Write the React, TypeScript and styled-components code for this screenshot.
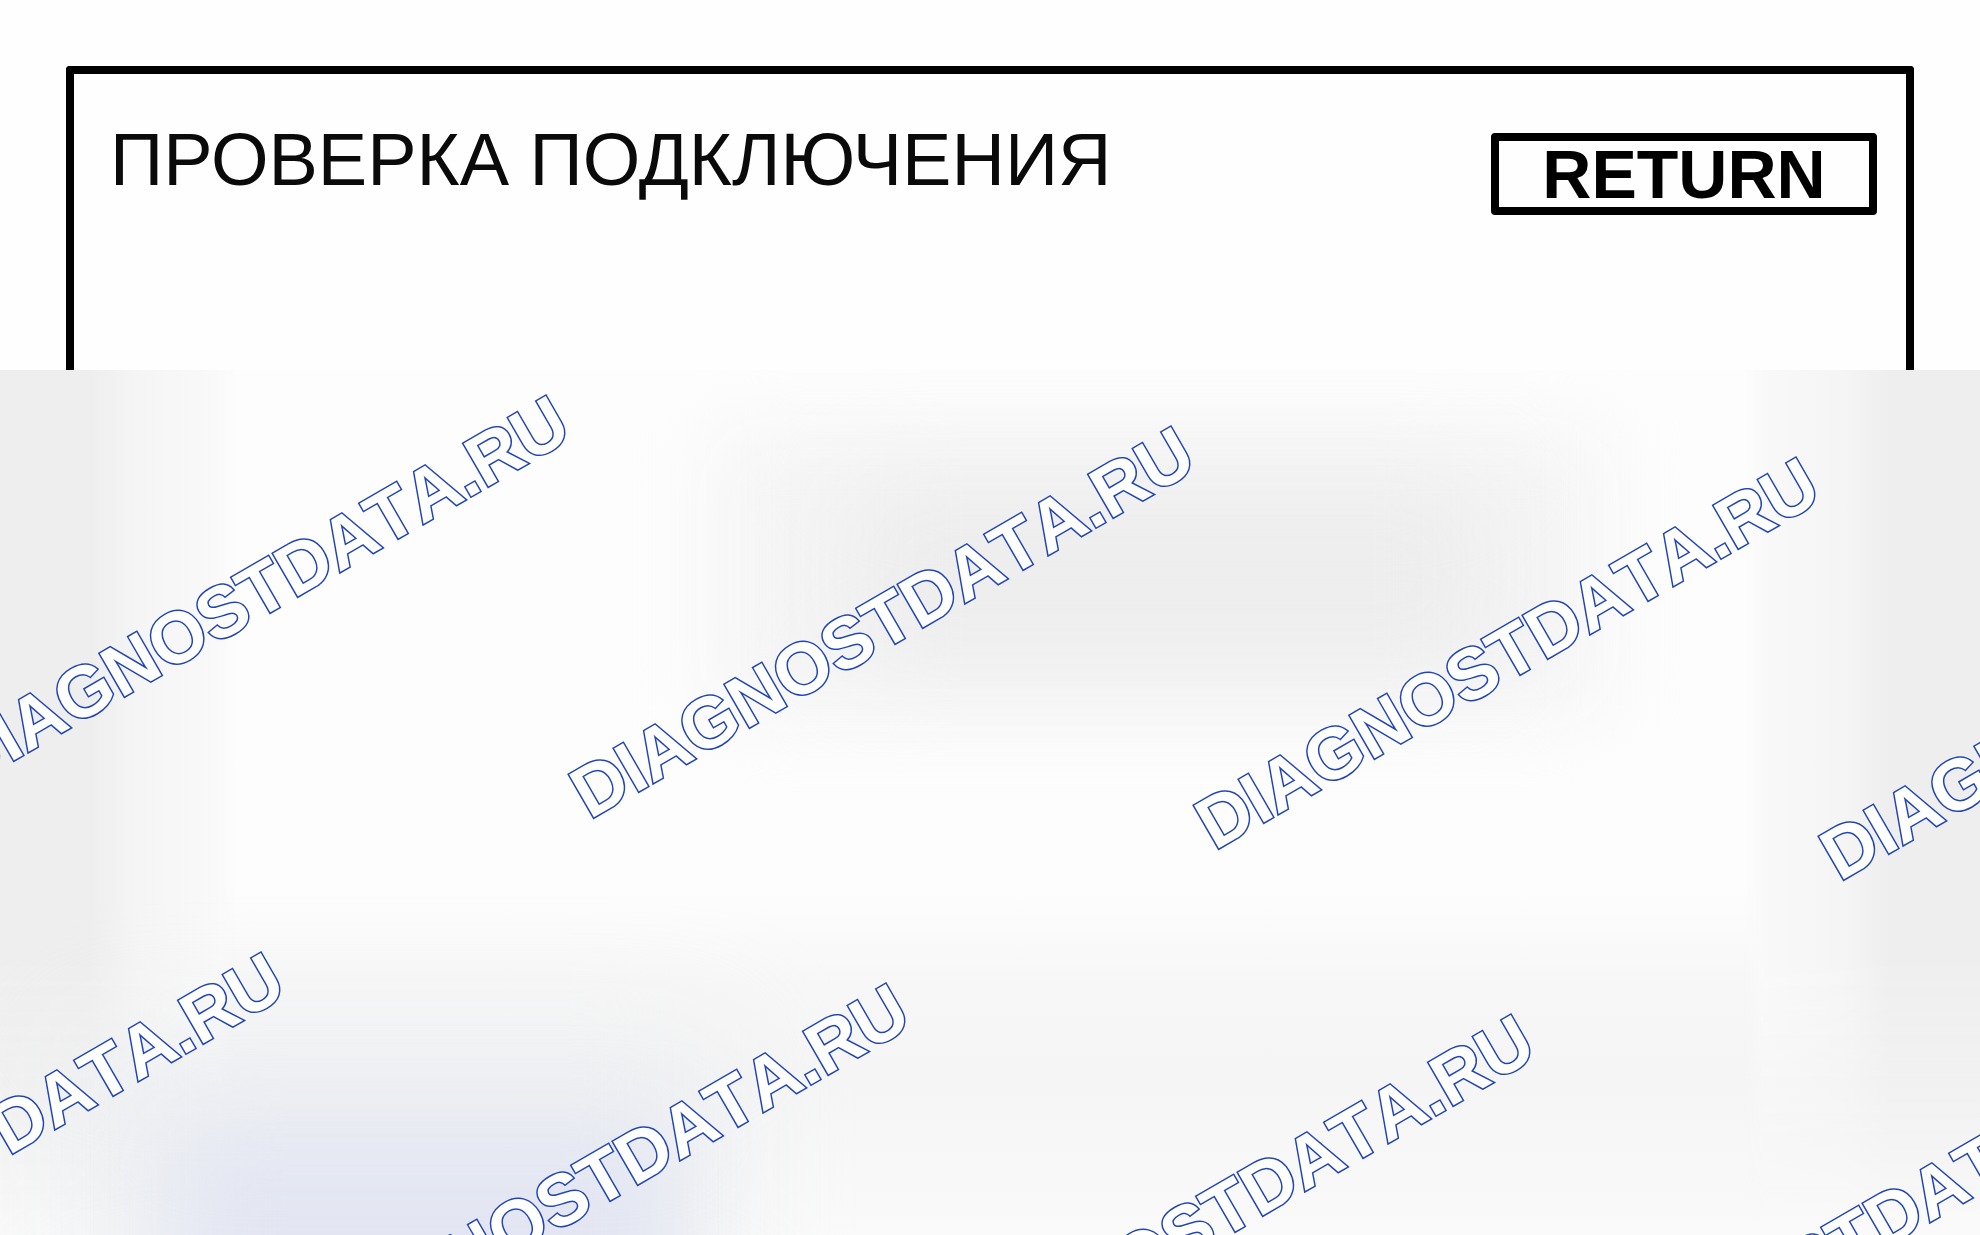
import React from "react";
import styled, { createGlobalStyle } from "styled-components";

const GlobalStyle = createGlobalStyle`
  * {
    box-sizing: border-box;
  }
  body {
    margin: 0;
    background: #fefefe;
    font-family: "Liberation Sans", Arial, sans-serif;
  }
`;

const Page = styled.main`
  display: flex;
  flex-direction: column;
  min-height: 100vh;
  overflow: hidden;
`;

const TopArea = styled.div`
  padding: 66px 66px 0;
  background: #fefefe;
`;

const Frame = styled.header`
  display: flex;
  align-items: flex-start;
  justify-content: space-between;
  gap: 32px;
  padding: 59px 29px 155px 36px;
  border: 8px solid #000;
  border-bottom: 0;
  border-radius: 4px 4px 0 0;
`;

const Title = styled.h1`
  margin: 0;
  font-size: 74px;
  font-weight: 400;
  line-height: 54px;
  white-space: nowrap;
  color: #0a0a0a;
`;

const ReturnButton = styled.button`
  width: 386px;
  height: 82px;
  padding: 0;
  border: 8px solid #000;
  border-radius: 4px;
  background: #fefefe;
  color: #000;
  font-family: inherit;
  font-size: 68px;
  font-weight: 700;
  line-height: 66px;
  cursor: pointer;
`;

const Panel = styled.section`
  display: grid;
  grid-template-columns: 236px 1fr 236px;
  position: relative;
  flex: 1;
  overflow: hidden;
  background: linear-gradient(to bottom, #fdfdfd 60%, #f7f7f7 71%, #f5f5f5 82%, #fafafa 100%);
`;

const SideShade = styled.div<{ $side: "left" | "right" }>`
  grid-column: ${(p) => (p.$side === "left" ? 1 : 3)};
  grid-row: 1;
  background: linear-gradient(
    to ${(p) => (p.$side === "left" ? "right" : "left")},
    #eeeeee 38%,
    #f5f5f5 58%,
    #f9f9f9 92%,
    rgba(253, 253, 253, 0) 100%
  );
  mask-image: linear-gradient(to bottom, #000 68%, transparent 98%);
`;

const Haze = styled.div<{ $color: string; $area: string; $blur: number }>`
  position: absolute;
  inset: ${(p) => p.$area};
  background: ${(p) => p.$color};
  filter: blur(${(p) => p.$blur}px);
`;

const Watermark = styled.span`
  position: absolute;
  font-size: 72px;
  font-weight: 700;
  font-kerning: none;
  line-height: 1;
  white-space: nowrap;
  color: #fff;
  paint-order: stroke fill;
  -webkit-text-stroke: 3px #2145b4;
  transform: translate(-50%, -50%) rotate(-30deg);
  pointer-events: none;
  user-select: none;
`;

const ORIGIN = { x: 882, y: 252 };
const COLUMN_STEP = { x: 625, y: 31 };
const ROW_STEP = { x: -285, y: 557 };
const ROWS = [0, 1];
const COLUMNS = [-1, 0, 1, 2];

export default function App() {
  return (
    <Page>
      <GlobalStyle />
      <TopArea>
        <Frame>
          <Title>ПРОВЕРКА ПОДКЛЮЧЕНИЯ</Title>
          <ReturnButton type="button">RETURN</ReturnButton>
        </Frame>
      </TopArea>
      <Panel>
        <SideShade $side="left" />
        <SideShade $side="right" />
        <Haze $color="#f5f5f5" $area="7% 19% 60% 36%" $blur={38} />
        <Haze $color="#ededed" $area="13% 25% 66% 43%" $blur={46} />
        <Haze $color="rgba(235, 237, 241, 0.8)" $area="78% 64% -8% 4%" $blur={60} />
        <Haze $color="#e3e6f2" $area="88% 66% -12% 9%" $blur={44} />
        {ROWS.map((row) =>
          COLUMNS.map((col) => (
            <Watermark
              key={`${row}:${col}`}
              style={{
                left: ORIGIN.x + col * COLUMN_STEP.x + row * ROW_STEP.x,
                top: ORIGIN.y + col * COLUMN_STEP.y + row * ROW_STEP.y,
              }}
            >
              DIAGNOSTDATA.RU
            </Watermark>
          ))
        )}
      </Panel>
    </Page>
  );
}
